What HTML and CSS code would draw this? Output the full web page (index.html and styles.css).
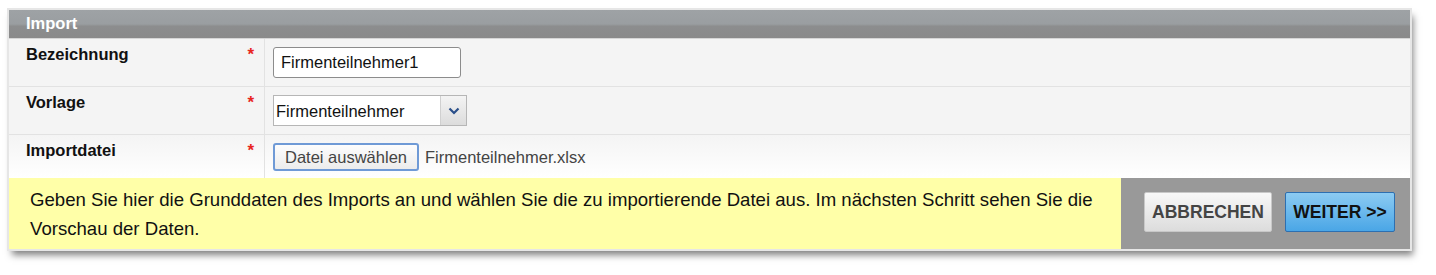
FILE: index.html
```html
<!DOCTYPE html>
<html lang="de">
<head>
  <meta charset="UTF-8">
  <title>Import</title>
  <link rel="stylesheet" href="styles.css">
</head>
<body>
  <div class="panel">
    <div class="panel-header">Import</div>
    <div class="form-row">
      <div class="form-label">Bezeichnung<span class="required">*</span></div>
      <div class="form-field">
        <input class="text-input" type="text" value="Firmenteilnehmer1">
      </div>
    </div>
    <div class="form-row">
      <div class="form-label">Vorlage<span class="required">*</span></div>
      <div class="form-field">
        <div class="select-box">
          <span class="select-value">Firmenteilnehmer</span>
          <span class="select-arrow">
            <svg width="12" height="8" viewBox="0 0 12 8"><path d="M1.5 1.5 L6 6 L10.5 1.5" fill="none" stroke="#2a4f8a" stroke-width="2.2"/></svg>
          </span>
        </div>
      </div>
    </div>
    <div class="form-row last-row">
      <div class="form-label">Importdatei<span class="required">*</span></div>
      <div class="form-field">
        <button class="file-button">Datei auswählen</button>
        <span class="file-name">Firmenteilnehmer.xlsx</span>
      </div>
    </div>
    <div class="panel-footer">
      <div class="hint">Geben Sie hier die Grunddaten des Imports an und wählen Sie die zu importierende Datei aus. Im nächsten Schritt sehen Sie die Vorschau der Daten.</div>
      <div class="actions">
        <button class="btn btn-cancel">ABBRECHEN</button>
        <button class="btn btn-next">WEITER &gt;&gt;</button>
      </div>
    </div>
  </div>
</body>
</html>
```

FILE: styles.css
```css
body {
  margin: 0;
  padding: 10px 0 25px 9px;
  background-color: white;
  font-family: "Liberation Sans", Arial, sans-serif;
  color: #111;
}

.panel {
  width: 1401px;
  background-color: #f4f4f4;
  outline: 2px solid #e6e6e6;
  box-shadow: 3px 6px 7px rgba(0, 0, 0, 0.5);
}

.panel-header {
  height: 28px;
  line-height: 27px;
  padding-left: 17px;
  color: white;
  font-weight: bold;
  font-size: 16.5px;
  background: linear-gradient(#9ea2a5, #9a9ea1 50%, #8c8d8e 58%, #8a8a8a);
  border-bottom: 1px solid #d6d6d6;
}

.form-row {
  display: flex;
  height: 47px;
  border-bottom: 1px solid #e2e2e2;
}

.last-row {
  height: 43px;
  border-bottom: none;
  background: linear-gradient(#f4f4f4, #ffffff);
}

.form-label {
  width: 238px;
  padding: 6px 0 0 17px;
  font-size: 16.5px;
  font-weight: bold;
  border-right: 1px solid #e2e2e2;
  display: flex;
  justify-content: space-between;
}

.required {
  color: #e8261e;
  font-size: 17px;
  padding-right: 10px;
}

.form-field {
  display: flex;
  align-items: flex-start;
  padding: 8px 0 0 8px;
}

.text-input {
  box-sizing: border-box;
  width: 188px;
  height: 31px;
  margin: 0;
  padding: 0 7px;
  border: 1px solid #8c8c8c;
  border-radius: 3px;
  font-family: "Liberation Sans", Arial, sans-serif;
  font-size: 16.5px;
  color: #111;
  background: white;
}

.select-box {
  box-sizing: border-box;
  display: flex;
  width: 194px;
  height: 31px;
  border: 1px solid #b6b6b6;
  background: white;
}

.select-value {
  flex: 1;
  font-size: 16.5px;
  line-height: 31px;
  padding-left: 2px;
}

.select-arrow {
  width: 25px;
  border-left: 1px solid #d0d0d0;
  background: linear-gradient(#f4f4f4, #dcdcdc);
  display: flex;
  align-items: center;
  justify-content: center;
}

.file-button {
  box-sizing: border-box;
  width: 146px;
  height: 28px;
  margin: 0;
  padding: 0;
  border: 2px solid #6f9ad6;
  border-radius: 3px;
  background: linear-gradient(#fdfdfd, #ececec);
  font-family: "Liberation Sans", Arial, sans-serif;
  font-size: 16.5px;
  color: #444;
}

.file-name {
  padding-left: 6px;
  line-height: 28px;
  font-size: 16.5px;
  color: #444;
}

.panel-footer {
  display: flex;
  height: 71px;
}

.hint {
  flex: 1;
  background-color: #ffffa8;
  padding: 7px 0 0 21px;
  font-size: 18.6px;
  line-height: 29px;
}

.actions {
  width: 289px;
  flex-shrink: 0;
  background-color: #999999;
  display: flex;
  align-items: flex-start;
  padding-top: 14px;
  box-sizing: border-box;
  padding-left: 23px;
  gap: 13px;
}

.btn {
  height: 40px;
  padding: 0;
  font-family: "Liberation Sans", Arial, sans-serif;
  font-weight: bold;
  font-size: 17.5px;
  border-radius: 2px;
  cursor: pointer;
}

.btn-cancel {
  width: 128px;
  color: #444;
  border: 1px solid #c8c8c8;
  background: linear-gradient(#f8f8f8, #dcdcdc);
}

.btn-next {
  width: 110px;
  color: #111;
  border: 1px solid #2d6fb0;
  background: linear-gradient(#8ccbf2, #4aa6e6);
}
```
